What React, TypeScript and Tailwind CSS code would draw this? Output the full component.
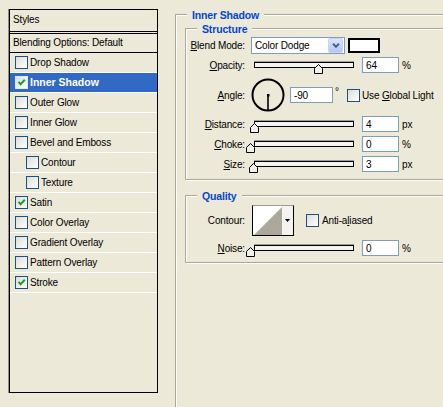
import React from "react";

const styleItems = [
  { label: "Drop Shadow" },
  { label: "Inner Shadow", checked: true, active: true },
  { label: "Outer Glow" },
  { label: "Inner Glow" },
  { label: "Bevel and Emboss" },
  { label: "Contour", indent: true },
  { label: "Texture", indent: true },
  { label: "Satin", checked: true },
  { label: "Color Overlay" },
  { label: "Gradient Overlay" },
  { label: "Pattern Overlay" },
  { label: "Stroke", checked: true },
];

function CheckBox({ checked, light }: { checked?: boolean; light?: boolean }) {
  return (
    <span
      className={`flex h-[13px] w-[13px] shrink-0 items-center justify-center border bg-linear-to-br from-[#dcdcd7] to-white ${
        light ? "border-[#dfe7f7]" : "border-[#1c5180]"
      }`}
    >
      {checked && (
        <svg width="9" height="9" viewBox="0 0 9 9">
          <path d="M1.5 3.8 L3.6 6.2 L7.8 1.8" stroke="#21a121" strokeWidth="2" fill="none" />
        </svg>
      )}
    </span>
  );
}

function GroupBox({
  title,
  className,
  children,
}: {
  title: string;
  className: string;
  children?: React.ReactNode;
}) {
  return (
    <div
      className={`relative border border-[#aca899] shadow-[inset_1px_1px_0_#fff,1px_1px_0_#fff] ${className}`}
    >
      <span className="absolute left-[11px] top-[-8px] bg-[#ece9d8] px-[5px] text-[10.5px] font-bold leading-[16px] text-[#0046d5]">
        {title}
      </span>
      {children}
    </div>
  );
}

function Label({ children }: { children: React.ReactNode }) {
  return <span className="w-[59px] shrink-0 text-right">{children}</span>;
}

function Key({ children }: { children: React.ReactNode }) {
  return <span className="underline underline-offset-[1px]">{children}</span>;
}

function NumBox({ value, w = "w-[37px]" }: { value: string; w?: string }) {
  return (
    <div className={`flex h-[16px] items-center border border-[#7f9db9] bg-white pl-[3px] ${w}`}>
      {value}
    </div>
  );
}

// pos = thumb centre, px from the left end of the track
function Slider({ pos }: { pos: number }) {
  return (
    <div className="relative ml-[5px] h-[20px] w-[108px] shrink-0">
      <div className="absolute left-[4px] top-[7px] h-[6px] w-[100px] border border-black bg-[#f4f3ee] shadow-[0_-1px_0_#9d9d9d]" />
      <svg
        className="absolute top-[9px]"
        style={{ left: Math.round(pos) }}
        width="9"
        height="10"
        viewBox="0 0 9 10"
      >
        <polygon points="4.5,0.5 8.5,4.5 8.5,9.5 0.5,9.5 0.5,4.5" fill="#f0efe8" stroke="#000" />
      </svg>
    </div>
  );
}

function SliderRow({
  label,
  pos,
  value,
  unit,
}: {
  label: React.ReactNode;
  pos: number;
  value: string;
  unit: string;
}) {
  return (
    <div className="flex h-[20px] items-center">
      <Label>{label}</Label>
      <Slider pos={pos} />
      <div className="ml-[4px]">
        <NumBox value={value} />
      </div>
      <span className="ml-[3px]">{unit}</span>
    </div>
  );
}

export default function App() {
  return (
    <div className="flex h-[407px] w-[443px] items-start overflow-hidden bg-[#ece9d8] font-['Liberation_Sans',Arial,sans-serif] text-[10px] tracking-[-0.15px] text-black">
      {/* styles list */}
      <div className="ml-[9px] mt-[9px] flex h-[384px] w-[149px] shrink-0 flex-col border border-black shadow-[-1px_0_0_#8f8f8f]">
        <div className="flex h-[21px] items-center pb-[3px] pl-[3px]">Styles</div>
        <div className="h-[1px] bg-black" />
        <div className="h-[1px]" />
        <div className="h-[1px] bg-black" />
        <div className="flex h-[19px] items-center border-b border-black pb-[1px] pl-[3px]">
          Blending Options: Default
        </div>
        {styleItems.map((item) => (
          <div
            key={item.label}
            className={`flex h-[20px] items-center border-b border-white ${
              item.indent ? "pl-[16px]" : "pl-[5px]"
            } ${item.active ? "bg-[#316ac5] text-[10.5px] font-bold text-white tracking-normal" : ""}`}
          >
            <CheckBox checked={item.checked} light={item.active} />
            <span className="ml-[2px]">{item.label}</span>
          </div>
        ))}
      </div>

      {/* settings */}
      <GroupBox title="Inner Shadow" className="ml-[17px] mt-[14px] h-[420px] w-[300px] shrink-0 pl-[9px] pt-[13px]">
        <GroupBox title="Structure" className="w-[275px] pb-[5px] pt-[6px]">
          <div className="flex h-[20px] items-center">
            <Label>
              <Key>B</Key>lend Mode:
            </Label>
            <div className="ml-[6px] flex h-[17px] w-[94px] items-center justify-between border border-[#7f9db9] bg-white pl-[3px] pr-[1px]">
              <span>Color Dodge</span>
              <span className="flex h-[15px] w-[15px] items-center justify-center rounded-[2px] border border-[#c6d5f8] bg-linear-to-b from-[#d9e4fd] to-[#b4c8f6]">
                <svg width="8" height="5" viewBox="0 0 8 5">
                  <path d="M1 0.8 L4 3.8 L7 0.8" stroke="#4d6185" strokeWidth="2" fill="none" />
                </svg>
              </span>
            </div>
            <div className="ml-[3px] h-[15px] w-[32px] border-2 border-black bg-white" />
          </div>

          <SliderRow label={<><Key>O</Key>pacity:</>} pos={63.5} value="64" unit="%" />

          <div className="mt-[2px] flex h-[36px] items-center">
            <Label>
              <Key>A</Key>ngle:
            </Label>
            <svg className="ml-[6px] shrink-0" width="34" height="34" viewBox="0 0 34 34">
              <circle cx="17" cy="17" r="15.5" stroke="#000" strokeWidth="2" fill="none" />
              <line x1="17" y1="17" x2="17" y2="33" stroke="#000" strokeWidth="1.6" />
              <rect x="16" y="16" width="2.5" height="2.5" fill="#000" />
            </svg>
            <div className="ml-[5px]">
              <NumBox value="-90" w="w-[43px]" />
            </div>
            <span className="mb-[8px] w-[14px] pl-[2px]">°</span>
            <CheckBox />
            <span className="ml-[2px]">
              Use <Key>G</Key>lobal Light
            </span>
          </div>

          <div className="mt-[1px]">
            <SliderRow label={<><Key>D</Key>istance:</>} pos={0} value="4" unit="px" />
            <SliderRow label={<><Key>C</Key>hoke:</>} pos={-4.5} value="0" unit="%" />
            <SliderRow label={<><Key>S</Key>ize:</>} pos={-1.5} value="3" unit="px" />
          </div>
        </GroupBox>

        <GroupBox title="Quality" className="mt-[15px] w-[275px] pb-[4px] pt-[9px]">
          <div className="flex h-[32px] items-start">
            <span className="flex h-[31px] w-[59px] shrink-0 items-center justify-end">Contour:</span>
            <div className="ml-[7px] flex h-[31px] w-[42px] border border-black border-t-[#9b9b9b]">
              <svg width="29" height="29" viewBox="0 0 29 29">
                <rect x="0" y="0" width="29" height="29" fill="#fff" />
                <polygon points="1,29 29,1 29,29" fill="#aca89b" />
              </svg>
              <div className="flex flex-1 items-center justify-center bg-[#f4f3ee]">
                <svg width="5" height="3" viewBox="0 0 5 3">
                  <polygon points="0,0 5,0 2.5,3" fill="#000" />
                </svg>
              </div>
            </div>
            <div className="ml-[12px] flex h-[31px] items-center">
              <CheckBox />
              <span className="ml-[3px]">
                Anti-a<Key>l</Key>iased
              </span>
            </div>
          </div>
          <div className="mt-[1px]">
            <SliderRow label={<><Key>N</Key>oise:</>} pos={-4.5} value="0" unit="%" />
          </div>
        </GroupBox>
      </GroupBox>
    </div>
  );
}
